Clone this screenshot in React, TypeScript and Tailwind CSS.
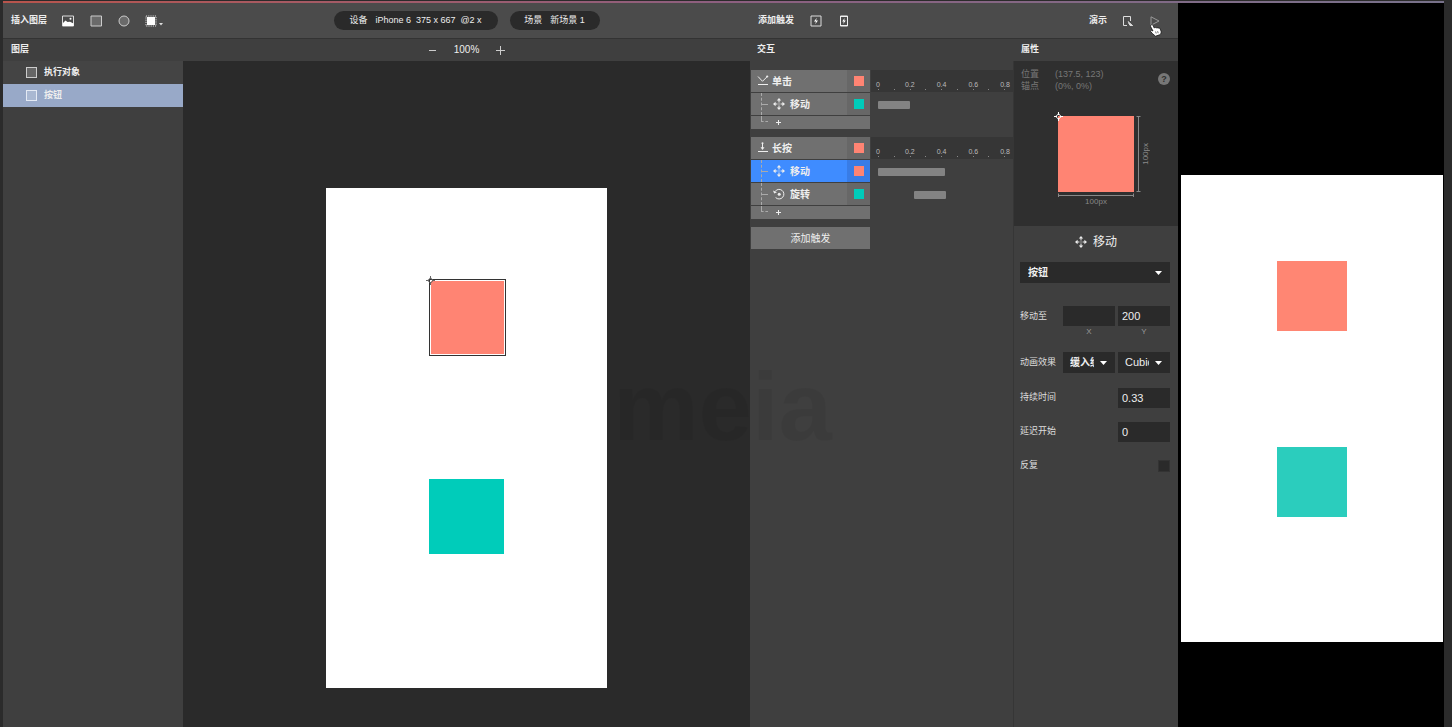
import React from "react";

const RULER = ["0", "0.2", "0.4", "0.6", "0.8"];

const COLORS = {
  red: "bg-[#ff8473]",
  teal: "bg-[#00ccba]",
};

type Color = keyof typeof COLORS;

const MoveIcon = ({ className = "" }: { className?: string }) => (
  <svg viewBox="0 0 12 12" className={`size-3 shrink-0 ${className}`} fill="currentColor">
    <path d="M6 0l2.200 2.600H3.800zM6 12l2.200-2.600H3.800zM0 6l2.600-2.200v4.400zM12 6L9.400 3.800v4.400z" />
    <path d="M5.500 2h1v2.400h-1zM5.500 7.600h1V10h-1zM2 5.500h2.400v1H2zM7.600 5.500H10v1H7.600z" />
    <path d="M5.500 5.500h1v1h-1z" />
  </svg>
);

const RotateIcon = () => (
  <svg viewBox="0 0 12 12" className="size-3 shrink-0" fill="none" stroke="currentColor">
    <path d="M2 3.600A4.800 4.800 0 1 1 2.600 9.500" />
    <path d="M0 2.400l1.200 3 2.800-1.200z" fill="currentColor" stroke="none" />
    <circle cx="6.200" cy="6.200" r="1.500" fill="currentColor" stroke="none" />
  </svg>
);

const ClickIcon = () => (
  <svg viewBox="0 0 12 12" className="size-3 shrink-0" fill="none" stroke="currentColor">
    <path d="M1 1.500l4.500 4.800L10 1.800M1 9.500h10" />
    <circle cx="10.200" cy="1.500" r="1.100" fill="currentColor" stroke="none" />
  </svg>
);

const PressIcon = () => (
  <svg viewBox="0 0 12 12" className="size-3 shrink-0" fill="none" stroke="currentColor">
    <path d="M5.500 1v5M1 9.500h10" />
    <circle cx="5.500" cy="1.200" r="1" fill="currentColor" stroke="none" />
    <path d="M3.500 5.200h4l-2 2.700z" fill="currentColor" stroke="none" />
  </svg>
);

const AnchorIcon = ({ className = "" }: { className?: string }) => (
  <svg viewBox="0 0 9 9" className={`size-[9px] ${className}`} fill="none" stroke="currentColor">
    <path d="M4.500 0v3M4.500 6v3M0 4.500h3M6 4.500h3" />
    <path d="M4.500 1.800l2.700 2.700-2.700 2.700-2.700-2.700z" />
  </svg>
);

const Caret = () => (
  <svg viewBox="0 0 7 4" className="pointer-events-none absolute right-2 top-1/2 h-1 w-[7px] -translate-y-1/2">
    <path d="M0 0h7L3.500 4z" fill="#fff" />
  </svg>
);

const Toolbar = () => (
  <header className="grid h-[36px] grid-cols-[180px_1fr_264px_164px] items-center border-b border-[#333] bg-[#4b4b4b] text-[#eee]">
    <div className="flex items-center pl-2">
      <span className="w-[51px] pt-px text-[9px] font-bold">插入图层</span>
      <button type="button" aria-label="图片" className="mr-4">
        <svg viewBox="0 0 12 12" className="size-3">
          <path d="M.500 1h11v10H.500z" fill="#4b4b4b" stroke="#ddd" />
          <path d="M1 8l2.500-2.500 2 1.500 2.500-.200 3.500 1.700v2.500H1z" fill="#fff" />
          <circle cx="8.500" cy="3.700" r="1" fill="#fff" />
        </svg>
      </button>
      <button type="button" aria-label="矩形" className="mr-4">
        <svg viewBox="0 0 12 12" className="size-3">
          <path d="M1 1h10.500v10H1z" fill="#6a6a6a" stroke="#ccc" />
        </svg>
      </button>
      <button type="button" aria-label="圆形" className="mr-[15px]">
        <svg viewBox="0 0 12 12" className="size-3">
          <circle cx="6" cy="6" r="5" fill="#6a6a6a" stroke="#ccc" />
        </svg>
      </button>
      <button type="button" aria-label="更多图层">
        <svg viewBox="0 0 18 12" className="h-3 w-[18px]">
          <path d="M1 1h10v10H1z" fill="none" stroke="#ddd" strokeDasharray="1.200 1" />
          <path d="M2 2h8v8H2z" fill="#fff" />
          <path d="M14 8h4l-2 2.500z" fill="#ddd" />
        </svg>
      </button>
    </div>
    <div className="flex items-center justify-center gap-3 text-[9px]">
      <button type="button" className="flex h-[19px] w-[164px] items-center justify-center gap-2 whitespace-pre rounded-full bg-[#2a2a2a]">
        <span>设备</span>
        <span>iPhone 6  375 x 667  @2 x</span>
      </button>
      <button type="button" className="flex h-[19px] w-[90px] items-center justify-center gap-2 rounded-full bg-[#2a2a2a]">
        <span>场景</span>
        <span>新场景 1</span>
      </button>
    </div>
    <div className="flex items-center pl-2">
      <span className="w-[52px] pt-px text-[9px] font-bold">添加触发</span>
      <button type="button" aria-label="添加触发" className="mr-4">
        <svg viewBox="0 0 12 12" className="size-3" fill="none" stroke="#ddd">
          <path d="M1 1h10v10H1z" />
          <path d="M6.800 2.800L4 6.400h2L5.200 9.200 8 5.600H6z" fill="#fff" stroke="none" />
        </svg>
      </button>
      <button type="button" aria-label="添加设备触发">
        <svg viewBox="0 0 12 12" className="size-3" fill="none" stroke="#eee">
          <path d="M2.500 1h7v10h-7z" />
          <path d="M2.500 1.500h7M2.500 10.500h7" />
          <path d="M6.600 3L4.200 6.400h1.600L5.200 9l2.600-3.400H6.200z" fill="#fff" stroke="none" />
        </svg>
      </button>
    </div>
    <div className="flex items-center justify-end pr-[18px]">
      <span className="mr-[15px] pt-px text-[9px] font-bold">演示</span>
      <button type="button" aria-label="设备预览" className="mr-4">
        <svg viewBox="0 0 12 12" className="size-3" fill="none" stroke="#ddd">
          <path d="M5 10.500H1.500v-9h7V6" />
          <path d="M6 6.500l4.500 4H8.500M6.500 8.500l2 2" />
          <path d="M5.500 6l5.500 5H8z" fill="#ddd" stroke="none" />
        </svg>
      </button>
      <button type="button" aria-label="播放" className="relative">
        <svg viewBox="0 0 10 10" className="size-[10px]" fill="none" stroke="#999">
          <path d="M1 .800l8 4.200-8 4.200z" />
        </svg>
        <svg viewBox="0 0 12 13" className="absolute left-0 top-2 h-[13px] w-3">
          <path
            d="M1 1c.900-.700 1.900-.200 2.200.600l1 2.400c.600-.600 1.400-.600 1.900 0 .600-.500 1.500-.400 1.900.200.700-.400 1.900-.100 2.200.700l.900 2.400c.300 1.700-.500 3-1.500 3.500L5.500 12.200 2.600 9.700.700 7.600c-.300-1.100.600-1.600 1.400-1L3 7 .600 2.600C.400 2 .500 1.400 1 1z"
            fill="#fff"
            stroke="#111"
            strokeWidth=".8"
          />
          <path d="M5.600 7.500l.600 2M7.600 7.200l.600 2" stroke="#111" strokeWidth=".6" />
        </svg>
      </button>
    </div>
  </header>
);

const TitleRow = () => (
  <div className="grid h-[22px] grid-cols-[180px_1fr_264px_164px] items-center bg-[#3f3f3f] text-[9px] font-bold text-[#eee]">
    <h2 className="pl-2">图层</h2>
    <div className="flex items-center justify-center gap-[17px]">
      <button type="button" aria-label="缩小">
        <svg viewBox="0 0 9 9" className="size-[9px]" stroke="#ccc">
          <path d="M1 4.500h7" />
        </svg>
      </button>
      <span className="text-[10px] leading-3 font-medium">100%</span>
      <button type="button" aria-label="放大">
        <svg viewBox="0 0 9 9" className="size-[9px]" stroke="#ccc">
          <path d="M0 4.500h9M4.500 0v9" />
        </svg>
      </button>
    </div>
    <h2 className="pl-[7px]">交互</h2>
    <h2 className="pl-[7px]">属性</h2>
  </div>
);

const Layer = ({ name, active }: { name: string; active?: boolean }) => (
  <button
    type="button"
    className={`flex h-[23px] w-full items-center gap-[7px] pl-[23px] text-[9px] font-bold text-[#eee] ${active ? "bg-[#98a9c8]" : "bg-[#444]"}`}
  >
    <span className={`size-[11px] border ${active ? "border-[#e4eaf4] bg-[#a9b8d2]" : "border-[#ccc] bg-[#666]"}`} />
    {name}
  </button>
);

const Canvas = () => (
  <main className="flex justify-center bg-[#2a2a2a] pt-[127px]">
    <div className="relative h-[500px] w-[281px] bg-white">
      <div className="absolute left-[103px] top-[91px] size-[77px] border border-[#333] bg-white p-px">
        <div className="size-full bg-[#ff8473]" />
        <AnchorIcon className="absolute -left-1 -top-1 text-[#666]" />
      </div>
      <div className="absolute left-[103px] top-[291px] size-[75px] bg-[#00ccba]" />
    </div>
  </main>
);

const Ruler = () => (
  <div className="flex h-[22px] flex-col justify-end bg-[#363636] pb-[2px] pl-[7px] pr-2">
    <div className="flex justify-between text-[7px] font-normal leading-[9px] text-[#bbb]">
      {RULER.map((t) => (
        <span key={t} className="flex w-0 justify-center">
          {t}
        </span>
      ))}
    </div>
    <div className="flex h-px justify-between">
      {Array.from({ length: 9 }, (_, i) => (
        <span key={i} className="w-px bg-[#888]" />
      ))}
    </div>
  </div>
);

type Action = { name: string; icon: React.ReactNode; color: Color; start: number; length: number; active?: boolean };

const Swatch = ({ color, active }: { color: Color; active?: boolean }) => (
  <span className={`flex h-full w-[23px] items-center justify-center ${active ? "bg-[#387ce6]" : "bg-[#676767]"}`}>
    <span className={`size-[10px] ${COLORS[color]}`} />
  </span>
);

const Trigger = ({ name, icon, actions }: { name: string; icon: React.ReactNode; actions: Action[] }) => (
  <section className="mb-2 grid grid-cols-[119px_1fr] gap-px text-[10px] font-bold text-[#eee]">
    <button type="button" className="flex h-[22px] items-center bg-[#707070] pl-[6px] text-left">
      {icon}
      <span className="flex-1 pl-[3px]">{name}</span>
      <Swatch color="red" />
    </button>
    <Ruler />
    {actions.map((a) => (
      <React.Fragment key={a.name}>
        <button
          type="button"
          className={`flex h-[22px] items-center pl-[10px] text-left ${a.active ? "bg-[#3f8cff]" : "bg-[#707070]"}`}
        >
          <span className="flex h-full w-[12px] items-center border-l border-dashed border-[#aaa]">
            <span className="w-[6px] border-t border-dashed border-[#aaa]" />
          </span>
          {a.icon}
          <span className="flex-1 pl-[5px]">{a.name}</span>
          <Swatch color={a.color} active={a.active} />
        </button>
        <div className="flex items-center pl-[7px] pt-[2px]">
          <div className="h-2 rounded-[1px] bg-[#838383]" style={{ marginLeft: a.start, width: a.length }} />
        </div>
      </React.Fragment>
    ))}
    <button type="button" aria-label="添加动作" className="flex h-[13px] bg-[#707070] pl-[10px]">
      <span className="mr-[8px] h-[6px] w-[7px] border-b border-l border-dashed border-[#aaa]" />
      <svg viewBox="0 0 5 5" className="mt-1 size-[5px]" stroke="#eee">
        <path d="M0 2.500h5M2.500 0v5" />
      </svg>
    </button>
  </section>
);

const Interactions = () => (
  <div className="border-r border-[#363636] bg-[#3f3f3f] pl-px pt-[9px]">
    <Trigger
      name="单击"
      icon={<ClickIcon />}
      actions={[{ name: "移动", icon: <MoveIcon />, color: "teal", start: 0, length: 32 }]}
    />
    <Trigger
      name="长按"
      icon={<PressIcon />}
      actions={[
        { name: "移动", icon: <MoveIcon />, color: "red", start: 0, length: 67, active: true },
        { name: "旋转", icon: <RotateIcon />, color: "teal", start: 36, length: 32 },
      ]}
    />
    <button type="button" className="block h-[22px] w-[119px] bg-[#707070] text-[10px] text-[#eee]">
      添加触发
    </button>
  </div>
);

const FIELD = "h-[20px] w-[52px] bg-[#2a2a2a] text-[11px] text-[#eee] outline-none";

const Properties = () => (
  <aside className="bg-[#3f3f3f] text-[9px] text-[#ddd]">
    <div className="relative h-[165px] bg-[#2f2f2f] pl-[7px] pt-[7px] text-[#777]">
      <dl className="grid grid-cols-[34px_1fr] leading-3">
        <dt>位置</dt>
        <dd>(137.5, 123)</dd>
        <dt>锚点</dt>
        <dd>(0%, 0%)</dd>
      </dl>
      <button
        type="button"
        aria-label="帮助"
        className="absolute right-2 top-3 flex size-3 items-center justify-center rounded-full bg-[#777] text-[9px] font-bold leading-none text-[#2f2f2f]"
      >
        ?
      </button>
      <div className="ml-[37px] mt-6 grid w-[90px] grid-cols-[76px_1fr] text-[8px] leading-[10px] text-[#888]">
        <div className="relative size-[76px] bg-[#ff8473]">
          <AnchorIcon className="absolute -left-1 -top-1 text-white" />
        </div>
        <div className="flex items-center">
          <svg viewBox="0 0 5 76" className="ml-[2px] h-[76px] w-[5px] shrink-0" stroke="#888" fill="none">
            <path d="M.500 .500h4M2.500 0v76M.500 75.500h4" />
          </svg>
          <span className="rotate-180 [writing-mode:vertical-rl]">100px</span>
        </div>
        <div className="text-center">
          <svg viewBox="0 0 76 5" className="block h-[5px] w-[76px]" stroke="#888" fill="none">
            <path d="M.500 1.500v4M0 3.500h76M75.500 1.500v4" />
          </svg>
          <span className="block">100px</span>
        </div>
      </div>
    </div>

    <h3 className="flex h-8 items-center justify-center gap-[6px] text-xs text-[#eee]">
      <MoveIcon />
      移动
    </h3>

    <form className="pl-[6px] pr-2 pt-1">
      <div className="relative">
        <select aria-label="对象" className="block h-[21px] w-full appearance-none bg-[#2a2a2a] pl-2 text-[10px] font-bold text-[#eee]">
          <option>按钮</option>
        </select>
        <Caret />
      </div>

      <div className="mt-[23px] flex gap-[3px]">
        <span className="flex-1 leading-5">移动至</span>
        <div className="text-center text-[8px] leading-3 text-[#999]">
          <input id="x" defaultValue="" className={`${FIELD} block px-1`} />
          <label htmlFor="x">X</label>
        </div>
        <div className="text-center text-[8px] leading-3 text-[#999]">
          <input id="y" defaultValue="200" className={`${FIELD} block px-1`} />
          <label htmlFor="y">Y</label>
        </div>
      </div>

      <div className="mt-[14px] flex items-center gap-[3px]">
        <label htmlFor="ease" className="flex-1">
          动画效果
        </label>
        <div className="relative">
          <select id="ease" className="block h-[21px] w-[52px] appearance-none bg-[#2a2a2a] pl-[7px] pr-[21px] text-[10px] font-bold text-[#eee]">
            <option>缓入缓出</option>
          </select>
          <Caret />
        </div>
        <div className="relative">
          <select aria-label="曲线" className="block h-[21px] w-[52px] appearance-none bg-[#2a2a2a] pl-[7px] pr-[21px] text-[11px] text-[#eee]">
            <option>Cubic</option>
          </select>
          <Caret />
        </div>
      </div>

      <div className="mt-[15px] flex items-center justify-between">
        <label htmlFor="duration">持续时间</label>
        <input id="duration" defaultValue="0.33" className={`${FIELD} px-1`} />
      </div>
      <div className="mt-[14px] flex items-center justify-between">
        <label htmlFor="delay">延迟开始</label>
        <input id="delay" defaultValue="0" className={`${FIELD} px-1`} />
      </div>
      <div className="mt-[17px] flex items-center justify-between">
        <label htmlFor="repeat">反复</label>
        <input id="repeat" type="checkbox" className="size-3 appearance-none border border-[#333] bg-[#2a2a2a]" />
      </div>
    </form>
  </aside>
);

const Preview = () => (
  <div className="w-[266px] shrink-0 bg-black pl-[3px] pr-px pt-[172px]">
    <div className="flex h-[467px] flex-col items-center bg-white pt-[86px]">
      <div className="size-[70px] bg-[#ff8673]" />
      <div className="mt-[116px] size-[70px] bg-[#2bcdbd]" />
    </div>
  </div>
);

const App = () => {
  return (
    <div className="flex min-h-screen flex-col bg-[#2b2b2b] pl-[3px] pr-2 pt-px font-['Liberation_Sans','Noto_Sans_CJK_SC',sans-serif]">
      <div className="h-[2px] shrink-0 bg-linear-to-r from-[#b8544c] via-[#8d5f80] to-[#77718a]" />
      <div className="flex flex-1">
        <div className="relative flex min-w-0 flex-1 flex-col">
          <Toolbar />
          <TitleRow />
          <div className="grid flex-1 grid-cols-[180px_1fr_264px_164px]">
            <nav className="bg-[#3f3f3f]">
              <Layer name="执行对象" />
              <Layer name="按钮" active />
            </nav>
            <Canvas />
            <Interactions />
            <Properties />
          </div>
          <div className="pointer-events-none absolute right-[346px] top-[348px] text-[96px] font-bold leading-[112px] text-black/5">
            meia
          </div>
        </div>
        <Preview />
      </div>
    </div>
  );
};

export default App;
